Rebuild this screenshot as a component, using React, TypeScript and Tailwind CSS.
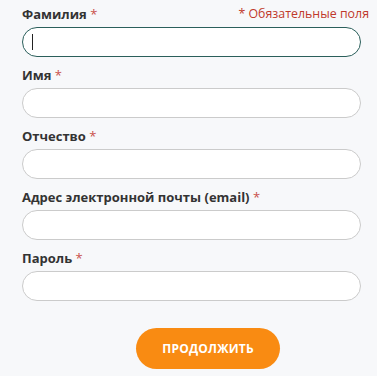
import React from "react"

const FIELDS = [
  { label: "Фамилия", focused: true },
  { label: "Имя" },
  { label: "Отчество" },
  { label: "Адрес электронной почты (email)" },
  { label: "Пароль", type: "password" },
]

export default function App() {
  return (
    <div
      className="w-[377px] h-[376px] bg-[#f7f8fa] pl-[22px] pr-[16px] pt-[5px] text-[#333]"
      style={{ fontFamily: '"Open Sans", "Noto Sans", sans-serif' }}
    >
      <form className="flex flex-col">
        {FIELDS.map((f, i) => (
          <div key={f.label} className="flex flex-col mb-[9px]">
            <div className="flex items-center justify-between h-[18px] mb-[4px]">
              <label className="text-[13px] font-bold leading-[18px]">
                {f.label} <span className="text-[#c9504a] font-normal">*</span>
              </label>
              {i === 0 && (
                <span className="text-[12.4px] leading-[18px] text-[#c0392b] -mr-[8px]">
                  * Обязательные поля
                </span>
              )}
            </div>
            <div className="relative">
              <input
                type={f.type ?? "text"}
                className={
                  f.focused
                    ? "w-full h-[30px] rounded-full bg-white border border-[#2b5f5b] outline-none px-3 text-[13px]"
                    : "w-full h-[30px] rounded-full bg-white border border-[#cbcbcb] outline-none px-3 text-[13px]"
                }
              />
              {f.focused && (
                <span className="absolute left-[10px] top-[7px] w-px h-[16px] bg-[#222]" />
              )}
            </div>
          </div>
        ))}
        <div className="flex mt-[18px]">
          <button
            type="button"
            className="ml-[114px] w-[144px] h-[41px] rounded-full bg-[#f98b12] text-white text-[12px] font-bold uppercase tracking-[0.2px]"
          >
            Продолжить
          </button>
        </div>
      </form>
    </div>
  )
}
